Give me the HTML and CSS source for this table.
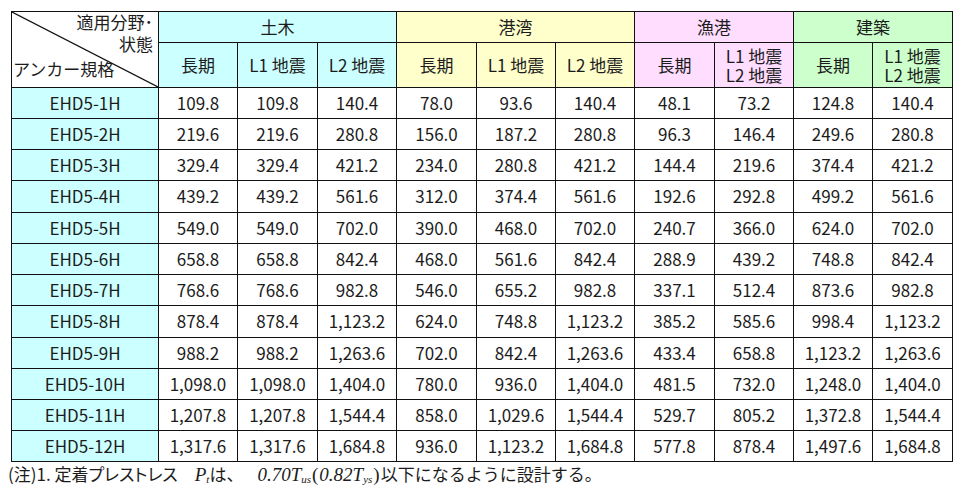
FILE: index.html
```html
<!DOCTYPE html>
<html lang="ja">
<head>
<meta charset="utf-8">
<link rel="stylesheet" href="styles.css">
</head>
<body>
<div class="sheet">
  <div class="grid">
    <div class="cell corner">
      <svg class="diag" viewBox="0 0 146 75" preserveAspectRatio="none"><line x1="0" y1="0" x2="146" y2="75" stroke="#111" stroke-width="1.2"/></svg>
      <span class="c1">適用分野･</span>
      <span class="c2">状態</span>
      <span class="c3">アンカー規格</span>
    </div>
    <div class="cell h1 cy s3">土木</div>
    <div class="cell h1 ye s3">港湾</div>
    <div class="cell h1 pk s2">漁港</div>
    <div class="cell h1 gr s2">建築</div>

    <div class="cell h2 cy">長期</div>
    <div class="cell h2 cy">L1 地震</div>
    <div class="cell h2 cy">L2 地震</div>
    <div class="cell h2 ye">長期</div>
    <div class="cell h2 ye">L1 地震</div>
    <div class="cell h2 ye">L2 地震</div>
    <div class="cell h2 pk">長期</div>
    <div class="cell h2 pk two">L1 地震<br>L2 地震</div>
    <div class="cell h2 gr">長期</div>
    <div class="cell h2 gr two">L1 地震<br>L2 地震</div>
  </div>
  <div class="grid body-grid" id="body"></div>
  <p class="note">(注)1. 定着<span class="kana">プレストレス</span>　<i class="it">P<sub>t</sub></i>は、<i class="it gap">0.70T<sub>us</sub></i><span class="par">(</span><i class="it">0.82T<sub>ys</sub></i><span class="par">)</span>以下になるように設計する。</p>
</div>
<script>
var rows = [
["EHD5-1H","109.8","109.8","140.4","78.0","93.6","140.4","48.1","73.2","124.8","140.4"],
["EHD5-2H","219.6","219.6","280.8","156.0","187.2","280.8","96.3","146.4","249.6","280.8"],
["EHD5-3H","329.4","329.4","421.2","234.0","280.8","421.2","144.4","219.6","374.4","421.2"],
["EHD5-4H","439.2","439.2","561.6","312.0","374.4","561.6","192.6","292.8","499.2","561.6"],
["EHD5-5H","549.0","549.0","702.0","390.0","468.0","702.0","240.7","366.0","624.0","702.0"],
["EHD5-6H","658.8","658.8","842.4","468.0","561.6","842.4","288.9","439.2","748.8","842.4"],
["EHD5-7H","768.6","768.6","982.8","546.0","655.2","982.8","337.1","512.4","873.6","982.8"],
["EHD5-8H","878.4","878.4","1,123.2","624.0","748.8","1,123.2","385.2","585.6","998.4","1,123.2"],
["EHD5-9H","988.2","988.2","1,263.6","702.0","842.4","1,263.6","433.4","658.8","1,123.2","1,263.6"],
["EHD5-10H","1,098.0","1,098.0","1,404.0","780.0","936.0","1,404.0","481.5","732.0","1,248.0","1,404.0"],
["EHD5-11H","1,207.8","1,207.8","1,544.4","858.0","1,029.6","1,544.4","529.7","805.2","1,372.8","1,544.4"],
["EHD5-12H","1,317.6","1,317.6","1,684.8","936.0","1,123.2","1,684.8","577.8","878.4","1,497.6","1,684.8"]
];
var b = document.getElementById("body");
rows.forEach(function(r){
  r.forEach(function(v,i){
    var d = document.createElement("div");
    d.className = "cell d" + (i===0 ? " cy" : "");
    d.textContent = v;
    b.appendChild(d);
  });
});
</script>
</body>
</html>
```

FILE: styles.css
```css
html, body {
  margin: 0;
  padding: 0;
  background: #fff;
}
.sheet {
  padding: 11px 0 0 11px;
  font-family: "Noto Sans CJK JP", "Noto Sans", sans-serif;
  color: #1c1c1c;
}
.grid {
  display: grid;
  width: max-content;
  grid-template-columns: 146px 78px 79px 78px 79px 78px 78px 79px 78px 78px 79px;
  grid-template-rows: 30px 44px;
  gap: 1px;
  background: #111;
  padding: 1px;
}
.body-grid {
  padding-top: 0;
  grid-template-rows: 30px 30px 30px 31px 30px 30px 30px 31px 30px 30px 30px 30px;
}
.cell {
  background: #fff;
  display: flex;
  align-items: center;
  justify-content: center;
  font-size: 17px;
  line-height: 1;
  white-space: nowrap;
  padding-bottom: 2px;
}
.cy { background: #ccffff; }
.ye { background: #ffffcc; }
.pk { background: #ffddff; }
.gr { background: #ccffcc; }
.s3 { grid-column: span 3; }
.s2 { grid-column: span 2; }
.two {
  line-height: 19px;
  text-align: center;
  padding-bottom: 1px;
}
.corner {
  grid-row: span 2;
  position: relative;
  display: flex;
  flex-direction: column;
  align-items: stretch;
  justify-content: flex-start;
  padding: 0 5px 0 1px;
}
.diag {
  position: absolute;
  left: 0;
  top: 0;
  width: 100%;
  height: 100%;
}
.corner span {
  position: relative;
  display: block;
  line-height: 22px;
}
.c1 { text-align: right; margin-top: -1px; }
.c2 { text-align: right; }
.c3 { text-align: left; margin-top: 3px; }
.note {
  margin: 1px 0 0 -3px;
  font-size: 17px;
  line-height: 22px;
}
.kana {
  font-feature-settings: "palt";
}
.it {
  font-family: "Liberation Serif", "DejaVu Serif", serif;
  font-style: italic;
  font-size: 19px;
}
.gap {
  margin-left: 14px;
}
.it sub {
  font-size: 11px;
  vertical-align: -2px;
}
.par {
  font-family: "Liberation Serif", serif;
  font-size: 19px;
  margin: 0 1px;
}
```
